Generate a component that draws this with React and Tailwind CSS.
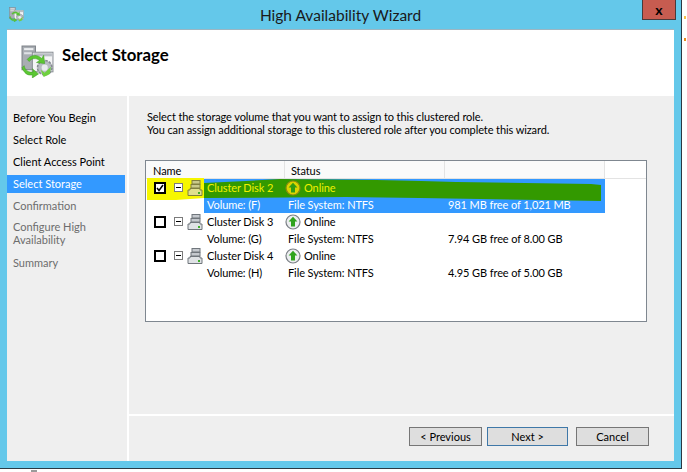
import React from "react";

const font = { fontFamily: 'Lato, "Liberation Sans", Arial, sans-serif' };

function WizardIcon({ size = 32 }) {
  return (
    <svg width={size} height={size} viewBox="0 0 32 32">
      <rect x="1" y="1" width="13" height="23" fill="#a9adb3" stroke="#7d8288" strokeWidth="1" />
      <rect x="3" y="3" width="9" height="2" fill="#eceef0" />
      <rect x="3" y="7" width="9" height="2" fill="#dfe2e5" />
      <rect x="11" y="7" width="20" height="19" fill="#f4f5f6" stroke="#8b9096" strokeWidth="1" />
      <rect x="12" y="8" width="18" height="3" fill="#b9bec4" />
      <circle cx="23" cy="22" r="7" fill="#b7bcc2" stroke="#858a90" strokeWidth="1.5" strokeDasharray="2.5 1.2" />
      <circle cx="23" cy="22" r="3" fill="#e9ecef" />
      <path d="M6 14 C10 9 16 9 20 13 L22 10 L23 18 L15 17 L18 15 C14 12 10 13 8 16 Z" fill="#5cc733" stroke="#3b9a1d" strokeWidth=".5" />
      <path d="M1 22 L3 20 C4 25 8 27 12 26 L11 23 L17 28 L11 32 L11 29 C6 30 3 27 1 22 Z" fill="#5cc733" stroke="#3b9a1d" strokeWidth=".5" />
      <path d="M19 24 L23 27 L29 21 L28 28 L22 31 Z" fill="#6fd13f" />
    </svg>
  );
}

function DiskIcon({ tint }) {
  const body = tint ? "#c9c98a" : "#c5c9ce";
  const line = tint ? "#7f7f3f" : "#70767c";
  return (
    <svg width="16" height="16" viewBox="0 0 16 16" className="block shrink-0">
      <rect x="5" y="0.5" width="8" height="3.5" fill={body} stroke={line} />
      <rect x="4" y="4.5" width="9" height="3.5" fill={body} stroke={line} />
      <path d="M3 8.5 H13 V10 H15 V15.5 H1 V10 H3 Z" fill={tint ? "#e0e08e" : "#dfe2e5"} stroke={line} />
      <rect x="11" y="12" width="2" height="2" fill="#3fae2a" />
    </svg>
  );
}

function OnlineIcon({ active }) {
  return (
    <svg width="16" height="16" viewBox="0 0 16 16" className="block shrink-0">
      <circle cx="8" cy="8" r="7" fill={active ? "#dcd400" : "#eceef0"} stroke={active ? "#8a8a10" : "#7a7f85"} strokeWidth="1.2" />
      <path d="M8 2.8 L12.4 7.6 H10 V12.4 H6 V7.6 H3.6 Z" fill={active ? "#2f9c14" : "#2fa31c"} />
    </svg>
  );
}

function Expander() {
  return (
    <span className="flex h-[9px] w-[9px] shrink-0 items-center justify-center border border-[#7b7b7b] bg-white">
      <span className="h-px w-[5px] bg-black" />
    </span>
  );
}

function Row({ name, vol, fs, free, selected, checked }) {
  return (
    <div className="relative flex h-[34px] w-[459px] text-[11px] leading-[17px] tracking-[-0.1px]">
      <div className="flex h-[17px] w-[58px] shrink-0 items-center pl-[8px]">
        <span className="relative z-10 flex h-[12px] w-[12px] shrink-0 items-center justify-center border-2 border-black bg-white">
          {checked && (
            <svg width="8" height="8" viewBox="0 0 8 8">
              <path d="M1 4 L3 6.5 L7 1" fill="none" stroke="#000" strokeWidth="1.5" />
            </svg>
          )}
        </span>
        <span className="relative z-10 ml-[8px]"><Expander /></span>
        <span className="relative z-10 ml-[4px]"><DiskIcon tint={selected} /></span>
      </div>
      <div className={`flex w-[401px] ${selected ? "bg-[#3399ff] text-white" : "text-black"}`}>
        <div className="w-[81px] shrink-0 whitespace-nowrap pl-[3px]">
          <div className={selected ? "relative z-10 text-[#f0f000]" : ""}>{name}</div>
          <div>Volume: ({vol})</div>
        </div>
        <div className="w-[160px] shrink-0 whitespace-nowrap">
          <div className="flex h-[17px] items-center gap-[3px]">
            <span className="relative z-10"><OnlineIcon active={selected} /></span>
            <span className={selected ? "relative z-10 text-[#f0f000]" : ""}>Online</span>
          </div>
          <div className="pl-[3px]">File System: {fs}</div>
        </div>
        <div className="w-[160px] shrink-0 whitespace-nowrap pl-[3px] pt-[17px]">{free}</div>
      </div>
    </div>
  );
}

function Step({ label, state, tall }) {
  const cls =
    state === "active"
      ? "bg-[#3399ff] text-white"
      : state === "done"
      ? "text-black"
      : "text-[#6d6d6d]";
  return (
    <div className={`flex w-[118px] items-center px-[6px] text-[11px] leading-[13px] ${tall ? "h-[31px] pb-[3px]" : "h-[18px] pb-px"} ${cls}`}>
      <span>{label}</span>
    </div>
  );
}

export default function App() {
  return (
    <div className="relative h-[472px] w-[687px] overflow-hidden bg-white" style={font}>
      <div className="flex h-[469px] w-[682px] flex-col border-r border-b border-[#2b3a44] bg-[#64c8ea]">
        {/* Title bar */}
        <div className="relative flex h-[29px] shrink-0 items-center">
          <span className="ml-[9px] mt-[-1px]"><WizardIcon size={15} /></span>
          <div className="absolute left-0 top-[6px] w-full text-center text-[15.5px] leading-[18px] text-[#1a1a1a]">
            High Availability Wizard
          </div>
          <div className="absolute right-[5px] top-[-1px] flex h-[21px] w-[34px] items-center justify-center border border-[#4a3a3a] bg-[#c75c50] text-[14px] font-bold leading-none text-black">
            x
          </div>
        </div>
        {/* Body */}
        <div className="ml-[7px] flex h-[432px] w-[667px] flex-col border-t border-[#9cb6c2] bg-white">
          <div className="flex h-[63px] shrink-0 items-start">
            <span className="ml-[14px] mt-[15px]"><WizardIcon size={33} /></span>
            <div className="ml-[8px] mt-[15px] text-[16.8px] font-bold leading-[20px] text-black">Select Storage</div>
          </div>
          <div className="flex flex-1 gap-[2px] pt-[3px]">
            <div className="flex w-[120px] shrink-0 flex-col gap-[4px] bg-[#efefef] pt-[13px]">
              <Step label="Before You Begin" state="done" />
              <Step label="Select Role" state="done" />
              <Step label="Client Access Point" state="done" />
              <Step label="Select Storage" state="active" />
              <Step label="Confirmation" />
              <Step label={<>Configure High<br />Availability</>} tall />
              <Step label="Summary" />
            </div>
            <div className="flex flex-1 flex-col">
              <div className="h-[318px] bg-[#efefef] pl-[16px] pr-[27px] pt-[14px]">
                <div className="ml-[2px] whitespace-nowrap text-[11px] leading-[13px] tracking-[-0.1px] text-black">
                  <div>Select the storage volume that you want to assign to this clustered role.</div>
                  <div>You can assign additional storage to this clustered role after you complete this wizard.</div>
                </div>
                <div className="relative mt-[24px] h-[162px] w-[502px] border border-[#7f8790] bg-white">
                  <div className="flex h-[18px] w-full border-b border-[#e3e3e3] text-[11px] leading-[20px] tracking-[-0.1px] text-black">
                    <div className="w-[139px] border-r border-[#e3e3e3] bg-[#fafafa] pl-[7px]">Name</div>
                    <div className="w-[160px] border-r border-[#e3e3e3] bg-[#fafafa] pl-[6px]">Status</div>
                    <div className="w-[160px] border-r border-[#e3e3e3] bg-[#fafafa]" />
                  </div>
                  <Row name="Cluster Disk 2" vol="F" fs="NTFS" free="981 MB free of 1,021 MB" selected checked />
                  <Row name="Cluster Disk 3" vol="G" fs="NTFS" free="7.94 GB free of 8.00 GB" />
                  <Row name="Cluster Disk 4" vol="H" fs="NTFS" free="4.95 GB free of 5.00 GB" />
                  {/* Marker strokes painted over the selected row */}
                  <svg width="500" height="26" className="absolute left-0 top-[17px]" viewBox="0 0 500 26">
                    <path d="M1 0 H58 V20 L30 22 H1 Z" fill="#f6f600" />
                    <path d="M58 5 L100 3 L134 1 L230 2 L275 3 L310 4 L445 6 L455 7 L455 23 L395 22 L274 20 L200 19 L58 20 Z" fill="#339900" />
                  </svg>
                </div>
              </div>
              <div className="flex flex-1 items-start border-t-2 border-white bg-[#efefef] pl-[280px] pt-[11px]">
                <button className="h-[19px] w-[73px] border border-[#767676] bg-[#dedede] text-[11px] leading-[16px] text-black">&lt; Previous</button>
                <button className="ml-[5px] h-[19px] w-[81px] border border-[#3f78a8] bg-[#dedede] text-[11px] leading-[16px] text-black">Next &gt;</button>
                <button className="ml-[8px] h-[19px] w-[73px] border border-[#767676] bg-[#dedede] text-[11px] leading-[16px] text-black">Cancel</button>
              </div>
            </div>
          </div>
        </div>
      </div>
      {/* Edges of whatever lies behind the window */}
      <div className="absolute left-[31px] top-[470px] h-[2px] w-[6px] bg-[#9a9a9a]" />
      <div className="absolute left-[684px] top-[16px] h-[3px] w-[2px] bg-[#f7c24a]" />
      <div className="absolute left-[684px] top-[38px] h-[3px] w-[2px] bg-[#e8891c]" />
    </div>
  );
}
